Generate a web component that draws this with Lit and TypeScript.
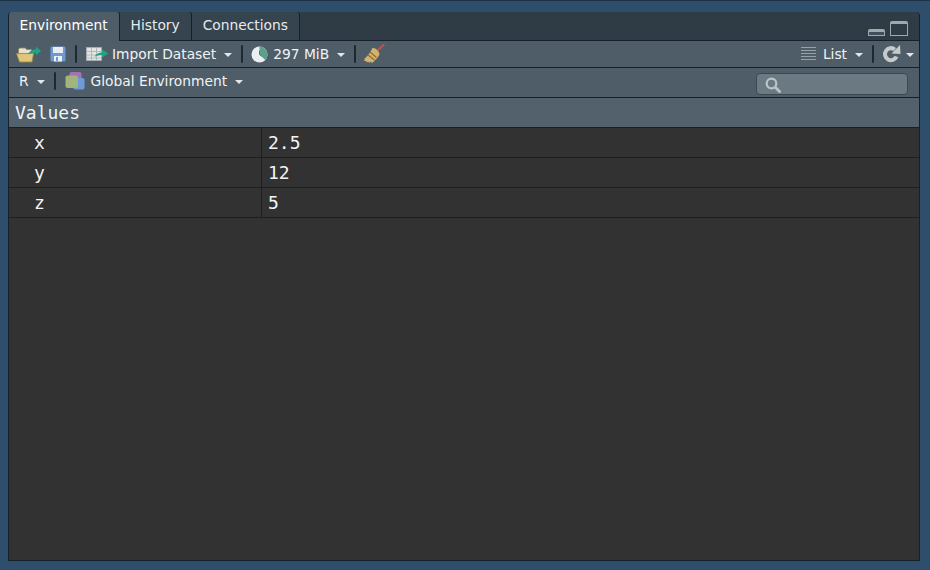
import { css, html, LitElement, svg } from "lit";
import { customElement } from "lit/decorators.js";

const caret = html`<span class="caret"></span>`;
const sep = html`<span class="sep"></span>`;

const openIcon = svg`<svg width="25" height="18" viewBox="0 0 25 18">
  <path d="M2.500 7V4.500l1-1.500h6l1 1.500h5V9h-13z" fill="#e4e1cf" stroke="#8e8654" stroke-width=".8"/>
  <path d="M.5 8.500h15.700l1.500-1L16 17H3.500z" fill="#e0c67c" stroke="#a08a45" stroke-width=".9"/>
  <path d="M12 9.500c1-3 4-5 8-5V1.500l5 4.500-5 4.500V8c-3 0-6 0-8 1.500z" fill="#22a184"/>
</svg>`;

const saveIcon = svg`<svg width="16" height="16" viewBox="0 0 16 16">
  <rect x=".5" y=".5" width="15" height="15" rx="1.500" fill="#6d9bd1"/>
  <rect x="3" y="1" width="10" height="6" fill="#e8edf2"/>
  <rect x="4" y="10" width="8" height="5.500" fill="#eef1f4"/>
  <rect x="6" y="11" width="2" height="4" fill="#6d9bd1"/>
</svg>`;

const importIcon = svg`<svg width="24" height="16" viewBox="0 0 24 16">
  <rect x=".5" y="1.500" width="15" height="13" fill="#e3e5e5" stroke="#b0b5b7" stroke-width=".6"/>
  <path d="M.5 5.500h15M.5 9h15M.5 12h15M5.500 1.500v13M10.500 1.500v13" stroke="#a8aeb1" stroke-width=".8"/>
  <path d="M8.500 11c1-3 4-4.500 7.500-4.500V3.500L22.500 7.500 16 11.500V9c-3 0-5.500.5-7.500 2z" fill="#22a184"/>
</svg>`;

const memIcon = svg`<svg width="17" height="17" viewBox="0 0 17 17">
  <circle cx="8.500" cy="8.500" r="8" fill="#ecefef"/>
  <path d="M8.500 8.500V.5A8 8 0 0 1 14.200 14.100z" fill="#5f9f8e"/>
  <path d="M8.500 4.500v4l2 2" fill="none" stroke="#4a5a65" stroke-width=".8"/>
</svg>`;

const broomIcon = svg`<svg width="22" height="20" viewBox="0 0 22 20">
  <path d="M13.500 7.500 20.500 1" stroke="#b5574f" stroke-width="2.200" stroke-linecap="round"/>
  <path d="M9.500 4c3-.5 7 3.500 7 6.500-1.500 3.500-5 6.500-7.500 8.500l-1.500-1.500-1 1.500-1.500-1.500-1 1-1-1.500L1 17l1-2-1.500.5C4 13 7.500 8.500 9.500 4z" fill="#d3b26c"/>
  <path d="M7 8l6.500 5.500M5 11l6.500 5" stroke="#8d6a36" stroke-width="1.100"/>
</svg>`;

const listIcon = svg`<svg width="15" height="14" viewBox="0 0 15 14">
  <path d="M0 .5h15M0 3.500h15M0 6.500h15M0 9.500h15M0 12.500h15" stroke="#98a1a6" stroke-width="1"/>
</svg>`;

const refreshIcon = svg`<svg width="19" height="18" viewBox="0 0 19 18">
  <path d="M14.500 11.500A6 6 0 1 1 12.800 4.500" fill="none" stroke="#c5cacc" stroke-width="4"/>
  <path d="M9.500 8.500 18.500 9 18 0z" fill="#c5cacc"/>
</svg>`;

const envIcon = svg`<svg width="20" height="20" viewBox="0 0 20 20">
  <rect x="4.500" y="1" width="12" height="12" rx="2" fill="#a572b5"/>
  <rect x="8" y="7" width="11.500" height="11.500" rx="2" fill="#6d9bd8"/>
  <rect x=".5" y="4.500" width="12.500" height="12.500" rx="2" fill="#a3b37c"/>
</svg>`;

const searchIcon = svg`<svg width="16" height="16" viewBox="0 0 16 16">
  <circle cx="6.500" cy="6.500" r="4.800" fill="none" stroke="#bcc2c5" stroke-width="2.200"/>
  <path d="M10 10l5.500 5.500" stroke="#bcc2c5" stroke-width="2.800"/>
</svg>`;

const rows = [
  ["x", "2.5"],
  ["y", "12"],
  ["z", "5"],
];

@customElement("app-root")
export class AppRoot extends LitElement {
  static styles = css`
    :host {
      display: block;
      height: 570px;
      box-sizing: border-box;
      padding: 11px 10px 9px 8px;
      background: #2f4e6b;
      border-top: 1px solid #1d3145;
      font-family: "DejaVu Sans", sans-serif;
      font-size: 13.800px;
      color: #f0f3f4;
    }

    .pane {
      height: 100%;
      box-sizing: border-box;
      display: flex;
      flex-direction: column;
      border: 1px solid #14202b;
      border-top-width: 0;
      border-radius: 4px 4px 0 0;
      background: #323232;
      overflow: hidden;
    }

    .tabs {
      height: 29px;
      flex: none;
      display: flex;
      background: #2f3c46;
      border-bottom: 1px solid #14202b;
      box-sizing: border-box;
    }

    .tab {
      height: 28px;
      box-sizing: border-box;
      padding: 5px 11.500px 0 10.500px;
      background: #35444f;
      border-right: 1px solid #14202b;
      border-radius: 0 3px 0 0;
      color: #e6eaec;
    }

    .tab.active {
      height: 29px;
      background: #4e5d68;
      color: #fff;
    }

    .winctl {
      margin-left: auto;
      display: flex;
      align-items: flex-end;
      gap: 5px;
      padding: 0 11px 4px 0;
    }

    .min {
      width: 17px;
      height: 7px;
      background: #3f4e59;
      border: 1px solid #a1a8ac;
      border-top-width: 3px;
      border-radius: 2px 2px 0 0;
      box-sizing: border-box;
    }

    .max {
      width: 18px;
      height: 15px;
      border: 1px solid #a1a8ac;
      border-top-width: 3px;
      border-radius: 2px 2px 0 0;
      box-sizing: border-box;
    }

    .bar {
      flex: none;
      display: flex;
      align-items: center;
      background: #4e5d68;
      border-bottom: 1px solid #14202b;
      box-sizing: border-box;
    }

    .bar1 {
      height: 27px;
      padding: 0 5px 0 7px;
    }

    .bar2 {
      height: 30px;
      padding: 0 11px 3px 10px;
    }

    .spacer {
      flex: 1;
    }

    .g2 { flex: none; width: 2px; }
    .g4 { flex: none; width: 4px; }
    .g5 { flex: none; width: 5px; }
    .g6 { flex: none; width: 6px; }
    .g7 { flex: none; width: 7px; }
    .g8 { flex: none; width: 8px; }
    .g9 { flex: none; width: 9px; }

    .caret {
      display: inline-block;
      flex: none;
      width: 0;
      height: 0;
      border-left: 4px solid transparent;
      border-right: 4px solid transparent;
      border-top: 4px solid #e3e7e9;
      margin-top: 2px;
    }

    .sep {
      flex: none;
      width: 2px;
      height: 18px;
      background: #1d2830;
      border-radius: 1px;
    }

    svg {
      display: block;
      flex: none;
    }

    .search {
      width: 152px;
      height: 22px;
      box-sizing: border-box;
      margin-top: 5px;
      padding: 3px 0 0 8px;
      background: #6b7a82;
      border: 1px solid #3a4852;
      border-radius: 4px;
    }

    .section {
      flex: none;
      height: 30px;
      box-sizing: border-box;
      padding: 4px 0 0 6px;
      background: #52616c;
      border-bottom: 1px solid #14202b;
      font-family: "DejaVu Sans Mono", monospace;
      font-size: 18px;
      line-height: 21px;
      color: #f1f4f5;
    }

    .row {
      flex: none;
      height: 30px;
      box-sizing: border-box;
      display: grid;
      grid-template-columns: 253px 1fr;
      background: #323232;
      border-bottom: 1px solid #14202b;
      font-family: "DejaVu Sans Mono", monospace;
      font-size: 18px;
      line-height: 29px;
      color: #f4f4f4;
    }

    .name {
      padding-left: 25px;
      border-right: 1px solid #14202b;
    }

    .value {
      padding-left: 6px;
    }
  `;

  render() {
    return html`<div class="pane">
      <div class="tabs">
        <div class="tab active">Environment</div>
        <div class="tab">History</div>
        <div class="tab">Connections</div>
        <div class="winctl">
          <span class="min"></span>
          <span class="max"></span>
        </div>
      </div>
      <div class="bar bar1">
        ${openIcon}
        <span class="g9"></span>
        ${saveIcon}
        <span class="g9"></span>
        ${sep}
        <span class="g9"></span>
        ${importIcon}
        <span class="g2"></span>
        <span>Import Dataset</span>
        <span class="g8"></span>
        ${caret}
        <span class="g9"></span>
        ${sep}
        <span class="g8"></span>
        ${memIcon}
        <span class="g5"></span>
        <span>297 MiB</span>
        <span class="g8"></span>
        ${caret}
        <span class="g9"></span>
        ${sep}
        <span class="g7"></span>
        ${broomIcon}
        <div class="spacer"></div>
        ${listIcon}
        <span class="g7"></span>
        <span>List</span>
        <span class="g8"></span>
        ${caret}
        <span class="g9"></span>
        ${sep}
        <span class="g8"></span>
        ${refreshIcon}
        <span class="g5"></span>
        ${caret}
      </div>
      <div class="bar bar2">
        <span>R</span>
        <span class="g8"></span>
        ${caret}
        <span class="g9"></span>
        ${sep}
        <span class="g9"></span>
        ${envIcon}
        <span class="g6"></span>
        <span>Global Environment</span>
        <span class="g8"></span>
        ${caret}
        <div class="spacer"></div>
        <div class="search">${searchIcon}</div>
      </div>
      <div class="section">Values</div>
      ${rows.map(
        ([n, v]) => html`<div class="row">
          <div class="name">${n}</div>
          <div class="value">${v}</div>
        </div>`,
      )}
    </div>`;
  }
}
